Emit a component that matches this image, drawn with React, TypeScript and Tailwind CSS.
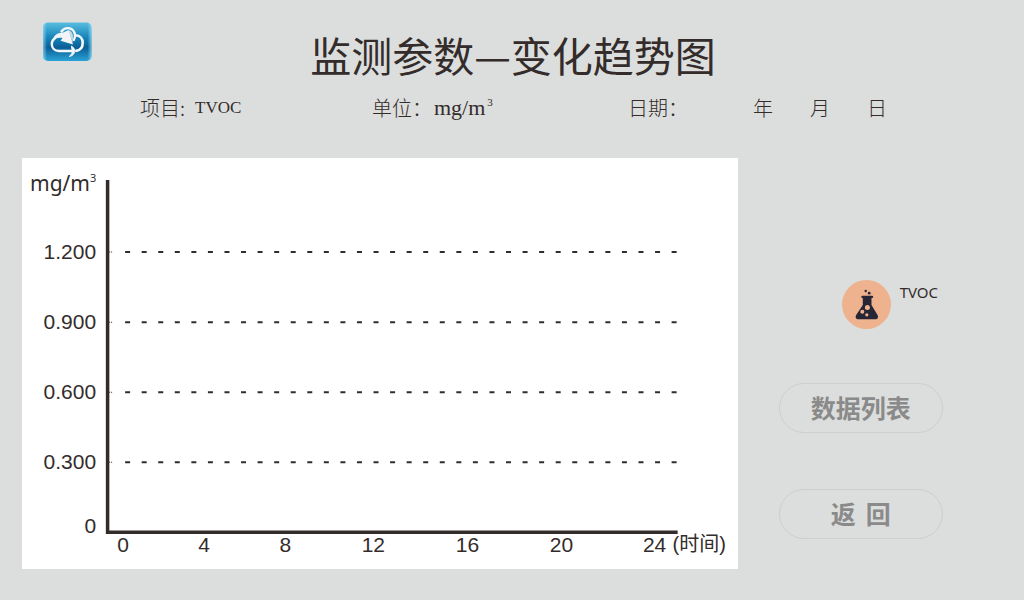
import type { ReactNode } from "react";

const gridRows = [
  { label: "1.200", y: 94 },
  { label: "0.900", y: 164 },
  { label: "0.600", y: 234 },
  { label: "0.300", y: 304 },
];

const hours = [
  { label: "0", x: 101 },
  { label: "4", x: 182 },
  { label: "8", x: 263 },
  { label: "12", x: 351 },
  { label: "16", x: 445 },
  { label: "20", x: 539 },
  { label: "24", x: 632 },
];

function CloudLogo() {
  return (
    <svg viewBox="0 0 50 40" className="h-10 w-[50px] shrink-0" role="img" aria-label="云">
      <defs>
        <linearGradient id="tile" x1="0" y1="0" x2="0" y2="1">
          <stop offset="0" stopColor="#58bde0" />
          <stop offset="0.4" stopColor="#1583b8" />
          <stop offset="0.65" stopColor="#0a5f97" />
          <stop offset="1" stopColor="#2ba3d6" />
        </linearGradient>
        <linearGradient id="edge" x1="0" y1="0" x2="1" y2="0">
          <stop offset="0" stopColor="#9be0f8" stopOpacity="0.7" />
          <stop offset="0.08" stopColor="#9be0f8" stopOpacity="0" />
          <stop offset="0.92" stopColor="#9be0f8" stopOpacity="0" />
          <stop offset="1" stopColor="#9be0f8" stopOpacity="0.7" />
        </linearGradient>
      </defs>
      <rect x="1" y="0.5" width="48.500" height="38.500" rx="5" fill="url(#tile)" />
      <rect x="1" y="0.5" width="48.500" height="38.500" rx="5" fill="url(#edge)" />
      <path
        d="M29.500 29H17C12.500 29 9.800 25.800 9.800 22c0-2.500 1.200-4.600 3.200-5.800"
        fill="none" stroke="#f4f8fa" strokeWidth="2.400" strokeLinecap="round"
      />
      <path
        d="M19.500 9.500C22.500 4.800 30.500 4.600 32.800 11.500c.6 2.500.2 4.500-1 6.500"
        fill="none" stroke="#f4f8fa" strokeWidth="2.400" strokeLinecap="round"
      />
      <path
        d="M33.500 13.200c4.500.3 7.300 3.500 7.200 7.800-.1 4-2.500 7.200-6.500 7.900"
        fill="none" stroke="#f4f8fa" strokeWidth="2.600" strokeLinecap="round"
      />
      <path d="M10.500 19C11.500 13.500 15 10.500 20.500 10.700L27 8l4 14.500L18.500 18.800l2-2.800c-4-.8-7.500.2-10 3z" fill="#f0f4f5" />
      <path d="M26.500 8c3 1 4.700 3.500 4.500 7.500l-.5 5z" fill="#c9dae2" />
      <path d="M29.500 24c3.600 2.500 4.300 5.800 1.700 8.600-1 1-2.300 1.600-4 1.900 2.500-1.800 3.600-4 2.800-6.500z" fill="#f4f8fa" stroke="#f4f8fa" />
    </svg>
  );
}

function FlaskBadge() {
  return (
    <svg viewBox="0 0 50 50" className="size-[50px] shrink-0" aria-hidden="true">
      <circle cx="24.500" cy="24.500" r="24.500" fill="#efb28e" />
      <path
        d="M20.500 15.700h9.500c1.600 0 1.600 2.400 0 2.400h-.5V25l6 10c1.300 2.300.2 4.300-2.300 4.300H16.500c-2.500 0-3.600-2-2.300-4.300l6.600-10v-6.900h-.3c-1.600 0-1.600-2.400 0-2.400z"
        fill="#262637"
      />
      <g fill="#262637">
        <circle cx="23.700" cy="11" r="1.200" />
        <circle cx="27.200" cy="13.200" r="1.400" />
      </g>
      <g fill="#efb28e">
        <circle cx="25.400" cy="27.400" r="2.500" />
        <circle cx="20.300" cy="31.800" r="2" />
        <circle cx="24.800" cy="34.800" r="1.600" />
      </g>
    </svg>
  );
}

function TrendChart() {
  return (
    <svg
      viewBox="0 0 715 411"
      className="block h-auto w-full bg-white font-['Liberation_Sans','Noto_Sans_CJK_SC',sans-serif] text-[21px]"
      fill="#332c2b"
      role="group"
      aria-label="TVOC"
    >
      <text x="8" y="33" className="font-['Noto_Sans',sans-serif] text-[21px]">mg/m</text>
      <text x="68" y="24" className="font-['Noto_Sans',sans-serif] text-[11px]">3</text>
      {gridRows.map((row) => (
        <g key={row.label}>
          <text x="74" y={row.y + 7} textAnchor="end">{row.label}</text>
          <path d={`M87 ${row.y}h4`} stroke="#332c2b" strokeDasharray="1 1" />
          <path d={`M103 ${row.y}H655`} stroke="#332c2b" strokeWidth="2" strokeDasharray="5 11.545" />
        </g>
      ))}
      <text x="74" y="375" textAnchor="end">0</text>
      <path d="M85.500 22V374H655" fill="none" stroke="#332c2b" strokeWidth="3.500" />
      {hours.map((hour) => (
        <text key={hour.label} x={hour.x} y="394" textAnchor="middle">{hour.label}</text>
      ))}
      <text x="650" y="393" className="text-[20px]">(时间)</text>
    </svg>
  );
}

function ActionButton({ children }: { children: ReactNode }) {
  return (
    <button
      type="button"
      className="flex h-[50px] w-[164px] items-center justify-center gap-2.5 rounded-full border border-[#cdcfce] text-[25px] font-bold text-[#8a8a8a]"
    >
      {children}
    </button>
  );
}

export default function App() {
  return (
    <main className="min-h-screen bg-[#dcdedd] pb-8 font-['Noto_Sans_CJK_SC',sans-serif] text-[#332c2b]">
      <header className="flex items-start pt-[22px] pr-[90px] pl-[42px]">
        <CloudLogo />
        <h1 className="mt-1.5 mb-0.5 flex-1 text-center text-[41px] leading-[52px] font-normal">监测参数—变化趋势图</h1>
      </header>

      <section className="mt-3 grid grid-cols-[232fr_256fr_125fr_57fr_57fr_157fr] pl-[140px] text-[20px] leading-7 font-light">
        <p className="flex gap-2.5">
          <span>项目:</span>
          <span className="font-['Liberation_Serif',serif] text-[17px]">TVOC</span>
        </p>
        <p className="flex gap-0.5">
          <span>单位：</span>
          <span className="font-['Liberation_Serif',serif] text-[22px]">mg/m</span>
          <sup className="top-0 font-['Liberation_Serif',serif] text-[11px] leading-4">3</sup>
        </p>
        <p>日期：</p>
        <span>年</span>
        <span>月</span>
        <span>日</span>
      </section>

      <div className="mt-9 grid grid-cols-[5fr_2fr] items-start pl-[22px]">
        <TrendChart />
        <aside className="flex flex-col items-center pt-[122px] pr-10">
          <div className="flex gap-2 pl-[58px]">
            <FlaskBadge />
            <span className="font-['Noto_Sans',sans-serif] text-[15px] leading-6">TVOC</span>
          </div>
          <div className="mt-[53px] flex flex-col gap-14">
            <ActionButton>数据列表</ActionButton>
            <ActionButton>
              <span>返</span>
              <span>回</span>
            </ActionButton>
          </div>
        </aside>
      </div>
    </main>
  );
}
